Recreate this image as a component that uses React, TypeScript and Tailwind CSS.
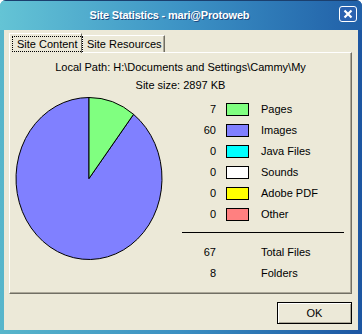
import React from "react"

const font = { fontFamily: '"Liberation Sans", Arial, sans-serif' }

type Row = { count: number; color: string; label: string }

const rows: Row[] = [
  { count: 7, color: "bg-[#80ff80]", label: "Pages" },
  { count: 60, color: "bg-[#8080ff]", label: "Images" },
  { count: 0, color: "bg-[#00ffff]", label: "Java Files" },
  { count: 0, color: "bg-white", label: "Sounds" },
  { count: 0, color: "bg-[#ffff00]", label: "Adobe PDF" },
  { count: 0, color: "bg-[#ff8080]", label: "Other" },
]

function Pie() {
  // 7 of 67 files are pages
  const cx = 74
  const cy = 81.5
  const rx = 73
  const ry = 81
  const a = (7 / 67) * Math.PI * 2
  const x = cx + rx * Math.sin(a)
  const y = cy - ry * Math.cos(a)
  return (
    <svg width="148" height="164" viewBox="0 0 148 164" className="block shrink-0">
      <path
        d={`M${cx},${cy} L${x},${y} A${rx},${ry} 0 1,1 ${cx},${cy - ry} Z`}
        fill="#8080ff"
        stroke="#000"
        strokeWidth="1"
      />
      <path
        d={`M${cx},${cy} L${cx},${cy - ry} A${rx},${ry} 0 0,1 ${x},${y} Z`}
        fill="#80ff80"
        stroke="#000"
        strokeWidth="1"
      />
    </svg>
  )
}

function LegendRow({ count, color, label }: { count: number; color?: string; label: string }) {
  return (
    <div className="flex h-[21px] items-center">
      <span className="w-[34px] text-right">{count}</span>
      {color ? (
        <span className={`ml-[10px] h-[13px] w-[23px] border border-black ${color}`} />
      ) : (
        <span className="ml-[10px] h-[13px] w-[23px]" />
      )}
      <span className="ml-[12px]">{label}</span>
    </div>
  )
}

export default function App() {
  return (
    <div
      className="flex h-[334px] w-[362px] flex-col overflow-hidden rounded-t-[6px] bg-gradient-to-r from-[#58b6cb] via-[#3b8fc2] to-[#1d56a2] text-[11px] text-black"
      style={font}
    >
      <div className="relative flex h-[30px] shrink-0 items-center border-t border-[#1b3f6e] bg-gradient-to-r from-[#64c4d5] via-[#3d93c5] to-[#2160a8]">
        <div className="w-[339px] text-center text-[11px] font-bold tracking-[-0.2px] text-white [text-shadow:1px_1px_0_#1c4a80]">
          Site Statistics - mari@Protoweb
        </div>
        <button className="absolute left-[339px] top-[5px] flex h-[16px] w-[18px] items-center justify-center rounded-[3px] border border-white bg-[#2b62b0]">
          <svg width="10" height="10" viewBox="0 0 10 10">
            <path d="M1.5 1.5 L8.5 8.5 M8.5 1.5 L1.5 8.5" stroke="#fff" strokeWidth="2.2" />
          </svg>
        </button>
      </div>

      <div className="mx-[4px] mb-[4px] flex flex-1 flex-col bg-[#ece9d8] pl-[5px] pr-[6px] pt-[3px]">
        <div className="flex h-[19px] items-end whitespace-nowrap">
          <div className="relative z-10 -mb-px flex h-[20px] w-[73px] shrink-0 items-start border-l border-t border-r border-white border-r-[#716f64] bg-[#ece9d8] pl-[2px] pt-[2px]">
            <span className="border border-dotted border-black px-[4px] leading-[14px]">Site Content</span>
          </div>
          <div className="flex h-[17px] w-[83px] shrink-0 items-center border-l border-t border-r border-white border-r-[#716f64] pl-[4px] shadow-[inset_-1px_0_0_#aca899]">
            Site Resources
          </div>
        </div>

        <div className="flex h-[242px] flex-col border border-white border-b-[#716f64] border-r-[#716f64] shadow-[inset_-1px_-1px_0_#aca899]">
          <div className="pt-[8px] text-center leading-[13px]">Local Path: H:\Documents and Settings\Cammy\My</div>
          <div className="mt-[5px] text-center leading-[13px]">Site size: 2897 KB</div>
          <div className="mt-[5px] flex pl-[5px]">
            <Pie />
            <div className="ml-[19px] w-[162px] pt-[2px]">
              {rows.map((r) => (
                <LegendRow key={r.label} {...r} />
              ))}
              <div className="mt-[7px] h-px bg-black" />
              <div className="mt-[9px]">
                <LegendRow count={67} label="Total Files" />
                <LegendRow count={8} label="Folders" />
              </div>
            </div>
          </div>
        </div>

        <div className="mt-[8px] flex justify-end">
          <button className="h-[22px] w-[75px] border border-black bg-[#ece9d8] text-[11px] shadow-[inset_1px_1px_0_#fff,inset_-1px_-1px_0_#aca899]">
            OK
          </button>
        </div>
      </div>
    </div>
  )
}
